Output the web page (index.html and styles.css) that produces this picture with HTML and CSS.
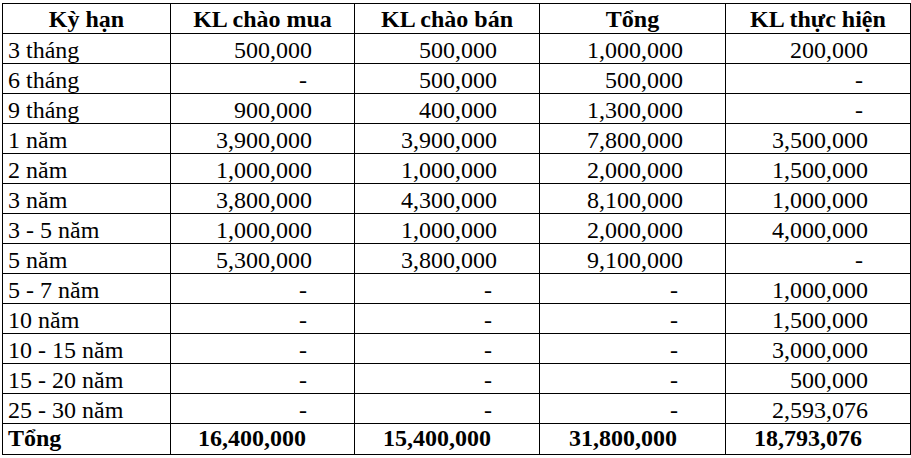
FILE: index.html
```html
<!DOCTYPE html>
<html lang="vi">
<head>
<meta charset="utf-8">
<title>Kỳ hạn</title>
<link rel="stylesheet" href="styles.css">
</head>
<body>
<table class="grid">
  <colgroup>
    <col class="c1"><col class="c2"><col class="c3"><col class="c4"><col class="c5">
  </colgroup>
  <thead>
    <tr class="head">
      <th>Kỳ hạn</th><th>KL chào mua</th><th>KL chào bán</th><th>Tổng</th><th>KL thực hiện</th>
    </tr>
  </thead>
  <tbody>
    <tr><td class="term">3 tháng</td><td class="num">500,000</td><td class="num">500,000</td><td class="num">1,000,000</td><td class="num">200,000</td></tr>
    <tr><td class="term">6 tháng</td><td class="num dash">-</td><td class="num">500,000</td><td class="num">500,000</td><td class="num dash">-</td></tr>
    <tr><td class="term">9 tháng</td><td class="num">900,000</td><td class="num">400,000</td><td class="num">1,300,000</td><td class="num dash">-</td></tr>
    <tr><td class="term">1 năm</td><td class="num">3,900,000</td><td class="num">3,900,000</td><td class="num">7,800,000</td><td class="num">3,500,000</td></tr>
    <tr><td class="term">2 năm</td><td class="num">1,000,000</td><td class="num">1,000,000</td><td class="num">2,000,000</td><td class="num">1,500,000</td></tr>
    <tr><td class="term">3 năm</td><td class="num">3,800,000</td><td class="num">4,300,000</td><td class="num">8,100,000</td><td class="num">1,000,000</td></tr>
    <tr><td class="term">3 - 5 năm</td><td class="num">1,000,000</td><td class="num">1,000,000</td><td class="num">2,000,000</td><td class="num">4,000,000</td></tr>
    <tr><td class="term">5 năm</td><td class="num">5,300,000</td><td class="num">3,800,000</td><td class="num">9,100,000</td><td class="num dash">-</td></tr>
    <tr><td class="term">5 - 7 năm</td><td class="num dash">-</td><td class="num dash">-</td><td class="num dash">-</td><td class="num">1,000,000</td></tr>
    <tr><td class="term">10 năm</td><td class="num dash">-</td><td class="num dash">-</td><td class="num dash">-</td><td class="num">1,500,000</td></tr>
    <tr><td class="term">10 - 15 năm</td><td class="num dash">-</td><td class="num dash">-</td><td class="num dash">-</td><td class="num">3,000,000</td></tr>
    <tr><td class="term">15 - 20 năm</td><td class="num dash">-</td><td class="num dash">-</td><td class="num dash">-</td><td class="num">500,000</td></tr>
    <tr><td class="term">25 - 30 năm</td><td class="num dash">-</td><td class="num dash">-</td><td class="num dash">-</td><td class="num">2,593,076</td></tr>
    <tr class="total"><td class="term">Tổng</td><td class="num">16,400,000</td><td class="num">15,400,000</td><td class="num">31,800,000</td><td class="num">18,793,076</td></tr>
  </tbody>
</table>
</body>
</html>
```
FILE: styles.css
```css
html, body {
  margin: 0;
  padding: 0;
  background: #ffffff;
}

body {
  font-family: "Liberation Serif", "Times New Roman", serif;
  color: #000000;
}

.grid {
  margin: 3px 0 0 2px;
  border-collapse: collapse;
  table-layout: fixed;
  width: 908px;
  font-size: 24px;
  line-height: 24px;
}

.c1 { width: 168px; }
.c2 { width: 184px; }
.c3 { width: 185px; }
.c4 { width: 186px; }
.c5 { width: 185px; }

.grid th,
.grid td {
  border: 1px solid #000000;
  padding: 0;
  vertical-align: bottom;
  white-space: nowrap;
  overflow: hidden;
}

.head th {
  height: 27px;
  font-weight: bold;
  text-align: center;
  padding-bottom: 2px;
}

.grid tbody td {
  height: 28px;
  padding-bottom: 1px;
}

.term {
  text-align: left;
  padding-left: 5px !important;
}

.num {
  text-align: right;
  padding-right: 42px !important;
}

.num.dash {
  padding-right: 47px !important;
}

.grid tbody .total td {
  font-weight: bold;
  height: 26px;
  padding-bottom: 4px;
}

.total .num {
  padding-right: 48px !important;
}
```
